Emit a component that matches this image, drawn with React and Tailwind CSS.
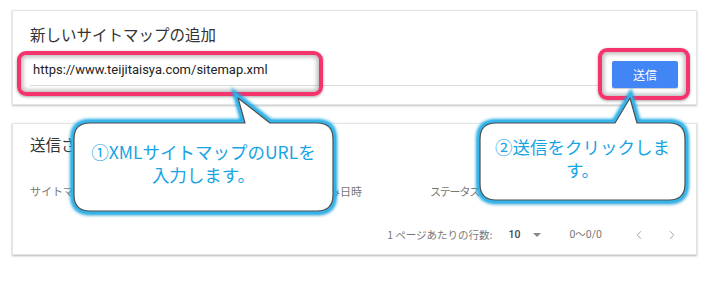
import { ChevronLeft, ChevronRight } from "lucide-react";

/* ─── Fonts ─────────────────────────────────────────────────────────────── */
const JP = { fontFamily: '"Noto Sans CJK JP", "Noto Sans", sans-serif' };
const LATIN = { fontFamily: 'Roboto, "Noto Sans CJK JP", sans-serif' };

/* ─── Callout bubbles (drawing) ─────────────────────────────────────────── */
const BUBBLE_1 =
  "M 90 123 L 245 123 L 238 98 L 270 123 L 317 123 Q 333 123 333 139 L 333 195 Q 333 211 317 211 L 90 211 Q 74 211 74 195 L 74 139 Q 74 123 90 123 Z";
const BUBBLE_2 =
  "M 496 123 L 615 123 L 630 98 L 637 123 L 669 123 Q 685 123 685 139 L 685 184 Q 685 200 669 200 L 496 200 Q 480 200 480 184 L 480 139 Q 480 123 496 123 Z";

function Bubbles() {
  return (
    <svg
      className="absolute inset-0 pointer-events-none"
      width="711"
      height="286"
      viewBox="0 0 711 286"
    >
      <defs>
        <filter id="glow" x="-20%" y="-20%" width="140%" height="140%">
          <feGaussianBlur stdDeviation="1.8" />
        </filter>
        <filter id="drop" x="-20%" y="-20%" width="140%" height="140%">
          <feGaussianBlur stdDeviation="2.5" />
        </filter>
      </defs>
      {[BUBBLE_1, BUBBLE_2].map((d) => (
        <g key={d}>
          <path d={d} transform="translate(1 3)" fill="rgba(0,0,0,0.25)" filter="url(#drop)" />
          <path d={d} fill="none" stroke="#19a8e6" strokeWidth="8" filter="url(#glow)" />
          <path d={d} fill="none" stroke="#36b6ec" strokeWidth="4.5" />
          <path d={d} fill="#ffffff" stroke="#4d4d4d" strokeWidth="1.2" strokeLinejoin="round" />
        </g>
      ))}
    </svg>
  );
}

/* ─── Pink highlight frame ──────────────────────────────────────────────── */
function Highlight({ className }) {
  return (
    <div
      className={`absolute border-[4px] border-[#f5336d] rounded-[9px]
        shadow-[inset_0_0_4px_2px_rgba(0,0,0,0.28),0_1px_3px_rgba(0,0,0,0.35)] ${className}`}
    />
  );
}

/* ─── App ───────────────────────────────────────────────────────────────── */
export default function App() {
  return (
    <div className="relative w-[711px] h-[286px] bg-white overflow-hidden" style={JP}>
      <div className="pl-[12px] pt-[10px] flex flex-col gap-[18px] w-[697px]">
        {/* ── Card: add sitemap ────────────────────────────────────── */}
        <section className="h-[95px] bg-white border border-[#e4e4e4] shadow-[0_1px_2px_rgba(0,0,0,0.25)] pl-[17px] pr-[18px] pt-[13px]">
          <h2 className="text-[15.5px] leading-[20px] text-[#333333]">新しいサイトマップの追加</h2>
          <div className="mt-[16px] flex items-end gap-[14px]">
            <div className="flex-1 h-[26px] border-b border-[#dcdcdc] pl-[3px] text-[13px] leading-[20px] text-[#222222]" style={LATIN}>
              https://www.teijitaisya.com/sitemap.xml
            </div>
            <button className="w-[66px] h-[27px] mb-[-2px] rounded-[2px] bg-[#4285f4] text-white text-[12px] shadow-[0_1px_1px_rgba(0,0,0,0.2)]">
              送信
            </button>
          </div>
        </section>

        {/* ── Card: submitted sitemaps ─────────────────────────────── */}
        <section className="h-[132px] bg-white border border-[#e4e4e4] shadow-[0_1px_2px_rgba(0,0,0,0.3)] pl-[17px] pr-[18px] pt-[10px]">
          <h2 className="text-[15.5px] leading-[20px] text-[#333333]">送信されたサイトマップ</h2>
          <div className="mt-[30px] flex text-[11px] leading-[14px] text-[#777777]">
            <span className="w-[140px]">サイトマップ</span>
            <span className="w-[104px]">送信日時</span>
            <span className="w-[156px]">最終読み込み日時</span>
            <span className="w-[130px] tracking-[-1.2px]">ステータス</span>
            <span>検出された URL</span>
          </div>
          <div className="mt-[30px] flex items-center justify-end text-[10.5px] leading-[14px] text-[#777777]">
            <span>1 ページあたりの行数:</span>
            <span className="ml-[16px] text-[#444444] font-medium" style={LATIN}>10</span>
            <span className="ml-[13px] w-0 h-0 border-l-[4px] border-r-[4px] border-t-[4px] border-l-transparent border-r-transparent border-t-[#888888]" />
            <span className="ml-[28px]" style={LATIN}>0〜0/0</span>
            <ChevronLeft className="ml-[30px] w-[14px] h-[14px] text-[#9a9a9a]" strokeWidth={1.6} />
            <ChevronRight className="ml-[19px] mr-[-1px] w-[14px] h-[14px] text-[#9a9a9a]" strokeWidth={1.6} />
          </div>
        </section>
      </div>

      {/* ── Highlights ─────────────────────────────────────────────── */}
      <Highlight className="left-[17px] top-[51px] w-[306px] h-[45px]" />
      <Highlight className="left-[598px] top-[48px] w-[92px] h-[52px]" />

      {/* ── Callouts ───────────────────────────────────────────────── */}
      <Bubbles />
      <div className="absolute left-[74px] top-[140px] w-[259px] text-center text-[17.5px] leading-[23px] text-[#17a4e4]">
        ①XMLサイトマップのURLを
        <br />
        入力します。
      </div>
      <div className="absolute left-[480px] top-[135px] w-[205px] text-center text-[17.5px] leading-[23px] text-[#17a4e4]">
        ②送信をクリックしま
        <br />
        す。
      </div>
    </div>
  );
}
